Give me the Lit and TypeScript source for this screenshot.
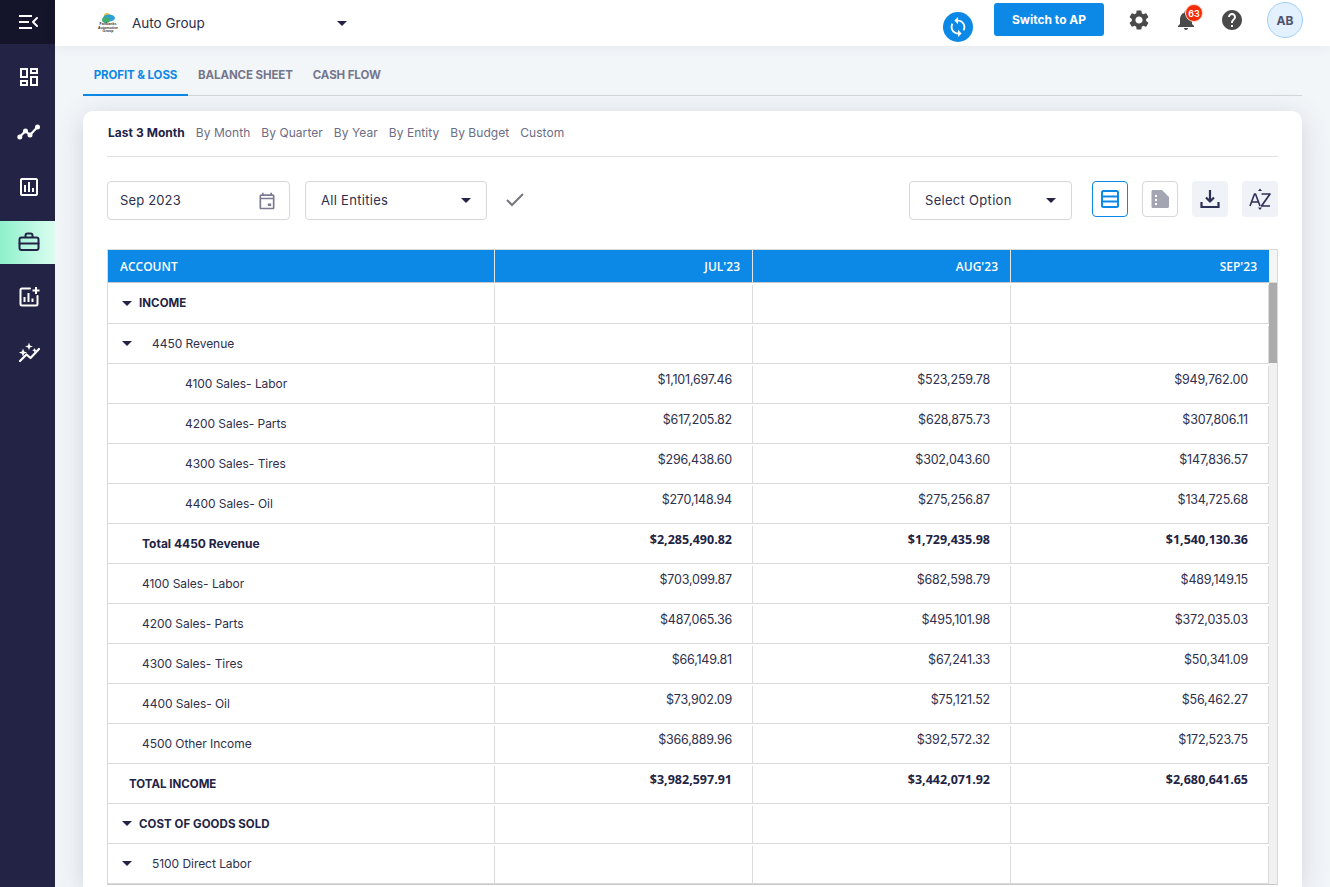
import { LitElement, html, css, svg } from "lit";
import { customElement } from "lit/decorators.js";

type Row = { label: string; kind: "section" | "group" | "child" | "total" | "item" | "grand"; v?: string[] };

const ROWS: Row[] = [
  { label: "INCOME", kind: "section" },
  { label: "4450 Revenue", kind: "group" },
  { label: "4100 Sales- Labor", kind: "child", v: ["$1,101,697.46", "$523,259.78", "$949,762.00"] },
  { label: "4200 Sales- Parts", kind: "child", v: ["$617,205.82", "$628,875.73", "$307,806.11"] },
  { label: "4300 Sales- Tires", kind: "child", v: ["$296,438.60", "$302,043.60", "$147,836.57"] },
  { label: "4400 Sales- Oil", kind: "child", v: ["$270,148.94", "$275,256.87", "$134,725.68"] },
  { label: "Total 4450 Revenue", kind: "total", v: ["$2,285,490.82", "$1,729,435.98", "$1,540,130.36"] },
  { label: "4100 Sales- Labor", kind: "item", v: ["$703,099.87", "$682,598.79", "$489,149.15"] },
  { label: "4200 Sales- Parts", kind: "item", v: ["$487,065.36", "$495,101.98", "$372,035.03"] },
  { label: "4300 Sales- Tires", kind: "item", v: ["$66,149.81", "$67,241.33", "$50,341.09"] },
  { label: "4400 Sales- Oil", kind: "item", v: ["$73,902.09", "$75,121.52", "$56,462.27"] },
  { label: "4500 Other Income", kind: "item", v: ["$366,889.96", "$392,572.32", "$172,523.75"] },
  { label: "TOTAL INCOME", kind: "grand", v: ["$3,982,597.91", "$3,442,071.92", "$2,680,641.65"] },
  { label: "COST OF GOODS SOLD", kind: "section" },
  { label: "5100 Direct Labor", kind: "group" },
];

const ico = (d: string, size = 24) =>
  html`<svg width=${size} height=${size} viewBox="0 0 24 24" fill="currentColor"><path d=${d} fill-rule="evenodd"></path></svg>`;

const P = {
  dash: "M19 5v2h-4V5h4M9 5v6H5V5h4m10 8v6h-4v-6h4M9 17v2H5v-2h4M21 3h-8v6h8V3zM11 3H3v10h8V3zm10 8h-8v10h8V11zm-10 4H3v6h8v-6z",
  report: "M19 3H5c-1.1 0-2 .9-2 2v14c0 1.1.9 2 2 2h14c1.1 0 2-.9 2-2V5c0-1.1-.9-2-2-2zm0 16H5V5h14v14zM7 10h2v7H7zM11 7h2v10h-2zM15 13h2v4h-2z",
  gear: "M19.14 12.94c.04-.3.06-.61.06-.94 0-.32-.02-.64-.07-.94l2.03-1.58c.18-.14.23-.41.12-.61l-1.92-3.32c-.12-.22-.37-.29-.59-.22l-2.39.96c-.5-.38-1.03-.7-1.62-.94l-.36-2.54c-.04-.24-.24-.41-.48-.41h-3.84c-.24 0-.43.17-.47.41l-.36 2.54c-.59.24-1.13.57-1.62.94l-2.39-.96c-.22-.08-.47 0-.59.22L2.74 8.87c-.12.21-.08.47.12.61l2.03 1.58c-.05.3-.09.63-.09.94s.02.64.07.94l-2.03 1.58c-.18.14-.23.41-.12.61l1.92 3.32c.12.22.37.29.59.22l2.39-.96c.5.38 1.03.7 1.62.94l.36 2.54c.05.24.24.41.48.41h3.84c.24 0 .44-.17.47-.41l.36-2.54c.59-.24 1.13-.56 1.62-.94l2.39.96c.22.08.47 0 .59-.22l1.92-3.32c.12-.22.07-.47-.12-.61l-2.01-1.58zM12 15.6c-1.98 0-3.6-1.62-3.6-3.6s1.62-3.6 3.6-3.6 3.6 1.62 3.6 3.6-1.62 3.6-3.6 3.6z",
  bell: "M12 22c1.1 0 2-.9 2-2h-4c0 1.1.89 2 2 2zm6-6v-5c0-3.07-1.64-5.64-4.5-6.32V4c0-.83-.67-1.5-1.5-1.5s-1.5.67-1.5 1.5v.68C7.63 5.36 6 7.92 6 11v5l-2 2v1h16v-1l-2-2z",
  help: "M12 2C6.48 2 2 6.48 2 12s4.48 10 10 10 10-4.48 10-10S17.52 2 12 2zm1 17h-2v-2h2v2zm2.07-7.75l-.9.92C13.45 12.9 13 13.5 13 15h-2v-.5c0-1.1.45-2.1 1.17-2.83l1.24-1.26c.37-.36.59-.86.59-1.41 0-1.1-.9-2-2-2s-2 .9-2 2H8c0-2.21 1.79-4 4-4s4 1.79 4 4c0 .88-.36 1.68-.93 2.25z",
  sync: "M12 4V1L8 5l4 4V6c3.31 0 6 2.69 6 6 0 1.01-.25 1.97-.7 2.8l1.46 1.46C19.54 15.03 20 13.57 20 12c0-4.42-3.58-8-8-8zm0 14c-3.31 0-6-2.69-6-6 0-1.01.25-1.97.7-2.8L5.24 7.74C4.46 8.97 4 10.43 4 12c0 4.42 3.58 8 8 8v3l4-4-4-4v3z",
  cal: "M19 4h-1V2h-2v2H8V2H6v2H5c-1.1 0-2 .9-2 2v14c0 1.1.9 2 2 2h14c1.1 0 2-.9 2-2V6c0-1.1-.9-2-2-2zm0 16H5V10h14v10zM5 8V6h14v2H5zM13 15h4v3h-4z",
  doc: "M5 3h9l7 7v9.500c0 .8-.7 1.500-1.500 1.500H5c-.8 0-1.500-.7-1.500-1.500v-15C3.500 3.700 4.200 3 5 3zm2 5v2h2V8H7zm0 4v2h2v-2H7zm0 4v2h2v-2H7z",
};

const stroke = (body: unknown, size = 24, sw = 2) =>
  html`<svg width=${size} height=${size} viewBox="0 0 24 24" fill="none" stroke="currentColor" stroke-width=${sw} stroke-linecap="round" stroke-linejoin="round">${body}</svg>`;

@customElement("app-root")
export class AppRoot extends LitElement {
  static styles = css`
    :host { display: flex; height: 100vh; overflow: hidden; background: #f3f6f9; color: #222345;
      font-family: Inter, "Noto Sans", sans-serif; font-size: 12px; }
    * { box-sizing: border-box; }
    svg { display: block; flex: none; }

    .side { width: 55px; flex: none; background: #222345; color: #fff; display: flex; flex-direction: column; }
    .side-top { height: 44px; background: #14142b; display: flex; align-items: center; justify-content: center; padding-left: 1px; }
    .nav { height: 43px; margin-bottom: 12px; padding-left: 2px; padding-bottom: 2px; display: flex; align-items: center; justify-content: center; }
    .navs { padding-top: 12px; display: flex; flex-direction: column; }
    .nav.on { background: linear-gradient(90deg, #8df0cb, #dcfdf1); color: #222345; }

    .main { flex: 1; min-width: 0; display: flex; flex-direction: column; }
    .top { height: 46px; flex: none; background: #fff; display: flex; align-items: center; position: relative; z-index: 2;
      box-shadow: 0 2px 10px rgba(60,70,90,.07); padding-left: 41px; }
    .logo { width: 24px; display: flex; flex-direction: column; align-items: center; margin-top: 1px; }
    .logo span { font: 700 3.6px/3.8px "Liberation Sans", sans-serif; color: #333; text-align: center; white-space: nowrap; }
    .brand { margin-left: 12px; width: 205px; font-size: 13.5px; color: #2e2f4d; }
    .caret { width: 0; height: 0; border-left: 5px solid transparent; border-right: 5px solid transparent; border-top: 5px solid #222345; flex: none; }
    .top-r { margin-left: auto; display: flex; align-items: center; padding-right: 27px; }
    .sync { width: 30px; height: 30px; border-radius: 50%; background: #0c88e6; color: #fff; display: flex; align-items: center; justify-content: center; margin-top: 8px; margin-right: 21px; }
    .ap { width: 110px; height: 33px; margin-top: -7px; background: #0c88e6; color: #fff; border-radius: 3px; border: 0; font: 700 12px Inter, sans-serif; display: flex; align-items: center; justify-content: center; }
    .ic { color: #4a4a4a; margin-top: -6px; }
    .gear { margin-left: 23px; }
    .bell { margin-left: 23px; position: relative; }
    .badge { position: absolute; left: 11px; top: -4px; width: 18px; height: 18px; border-radius: 50%; background: #f62a04; border: 1px solid #ffd9d0; color: #fff; font-size: 9px; font-weight: 600; display: flex; align-items: center; justify-content: center; }
    .help { margin-left: 22px; }
    .avatar { margin-left: 23px; margin-top: -6px; width: 36px; height: 36px; border-radius: 50%; background: #e3f0fd; border: 1px solid #9ecff7; color: #50526e; font-weight: 700; font-size: 12px; display: flex; align-items: center; justify-content: center; }

    .body { flex: 1; min-height: 0; padding: 0 28px 0 28px; display: flex; flex-direction: column; }
    .tabs { height: 50px; flex: none; display: flex; border-bottom: 1px solid #d3d6db; }
    .tab { padding: 8px 10px 0; display: flex; align-items: center; height: 50px; font-size: 11.5px; font-weight: 700; color: #75768c; letter-spacing: -.1px; white-space: nowrap; }
    .tab.on { color: #0c88e6; border-bottom: 2px solid #0c88e6; width: 105px; justify-content: center; padding-top: 10px; }
    .card { margin-top: 15px; flex: 1; min-height: 0; background: #fff; border-radius: 10px 10px 0 0; padding: 0 24px; box-shadow: 0 5px 28px rgba(50,60,80,.18); }
    .subs { height: 46px; border-bottom: 1px solid #e2e2e6; display: flex; align-items: center; gap: 11px; padding: 0 1px 2px; color: #6c6d84; font-size: 12px; letter-spacing: .05px; }
    .subs b { color: #222345; font-weight: 700; }
    .tools { height: 92px; padding-top: 24px; display: flex; align-items: flex-start; }
    .field { height: 39px; border: 1px solid #d6d7da; border-radius: 4px; display: flex; align-items: center; font-size: 13px; letter-spacing: .3px; color: #2e2f4d; padding-bottom: 2px; }
    .date { width: 183px; padding-left: 12px; padding-right: 12px; justify-content: space-between; letter-spacing: .15px; }
    .date svg { color: #7a7b90; margin-top: 2px; }
    .field .caret { margin-top: 2px; }
    .ent { width: 182px; margin-left: 15px; padding-left: 15px; padding-right: 15px; justify-content: space-between; }
    .check { color: #75767f; margin-left: 16px; margin-top: 6px; }
    .opt { width: 163px; margin-left: auto; padding-left: 15px; padding-right: 15px; justify-content: space-between; }
    .btn { width: 36px; height: 36px; margin-left: 14px; border-radius: 4px; display: flex; align-items: center; justify-content: center; }
    .btn.a { margin-left: 20px; border: 1px solid #0c88e6; color: #0c88e6; }
    .btn.b { border: 1px solid #d6d7da; color: #a4a5b2; }
    .btn.c { background: #eff3f8; color: #2e2f55; }

    .table { border: 1px solid #d9d9d9; border-bottom: 1px solid #c9c9c9; display: flex; flex-direction: column; height: 636px; }
    .scroller { display: flex; flex: 1; min-height: 0; overflow: hidden; }
    .thead { display: grid; grid-template-columns: 386px 258px 258px 259px 8px; height: 33px; flex: none; }
    .th { background: #0c88e6; color: #fff; border-bottom: 1px solid #c8c8c8; border-left: 1px solid #e4e4e4; font: 600 12px "Open Sans", sans-serif; display: flex; align-items: center; justify-content: flex-end; padding: 0 12px; }
    .th:first-child { justify-content: flex-start; border-left: 0; }
    .th.gap { background: #f4f5f5; border-left: 0; padding: 0; border-bottom-color: #d9d9d9; }
    .rows { width: 1161px; flex: none; }
    .row { display: grid; grid-template-columns: 386px 258px 258px 259px; height: 40px; border-bottom: 1px solid #dadada; }
    .row:first-child { height: 41px; }
    .cell { display: flex; align-items: center; font-size: 12px; letter-spacing: -.05px; color: #2e2f4d; min-width: 0; white-space: nowrap; }
    .num { border-left: 1px solid #dadada; justify-content: flex-end; align-items: flex-start; padding: 6px 20px 0 0; margin-top: 2px; font-size: 12.5px; letter-spacing: -.2px; }
    .num:last-child { border-right: 1px solid #dadada; }
    .row .caret { margin: 0 0 0 14px; }
    .section .lab { font-size: 11.5px; font-weight: 700; letter-spacing: .05px; color: #222345; margin-left: 7px; }
    .group .lab { margin-left: 20px; }
    .child .lab { padding-left: 77px; }
    .item .lab, .total .lab { padding-left: 34px; }
    .total .lab { font-weight: 700; color: #222345; font-size: 12px; letter-spacing: 0; }
    .grand .lab { padding-left: 21px; font-weight: 700; color: #222345; font-size: 11.5px; letter-spacing: 0; }
    .total .num, .grand .num { font-family: "Open Sans", sans-serif; font-weight: 700; font-size: 12.5px; letter-spacing: 0; color: #222345; padding-top: 5px; }
    .track { flex: 1; background: #f1f1f1; }
    .thumb { height: 80px; background: #ababab; }
  `;

  private renderRow(r: Row) {
    const caret = r.kind === "section" || r.kind === "group";
    return html`<div class="row ${r.kind}">
      <div class="cell">${caret ? html`<span class="caret"></span>` : ""}<span class="lab">${r.label}</span></div>
      ${[0, 1, 2].map((i) => html`<div class="cell num">${r.v ? r.v[i] : ""}</div>`)}
    </div>`;
  }

  render() {
    return html`
      <aside class="side">
        <div class="side-top">
          ${stroke(svg`<path d="M3 6h13M3 12h10M3 18h13" stroke-linecap="butt"/><path d="M21 8l-4 4 4 4"/>`, 24, 2)}
        </div>
        <div class="navs">
          <div class="nav">${ico(P.dash)}</div>
          <div class="nav">${stroke(svg`<path d="M2.5 17l6-6 4.5 4 7.5-8" stroke-width="2.2"/><circle cx="2.8" cy="17" r="1.5" fill="currentColor"/><circle cx="8.5" cy="11" r="1.5" fill="currentColor"/><circle cx="13" cy="15" r="1.5" fill="currentColor"/><circle cx="20.5" cy="7" r="1.5" fill="currentColor"/>`)}</div>
          <div class="nav">${ico(P.report)}</div>
          <div class="nav on">${stroke(svg`<rect x="2.5" y="7.5" width="19" height="12.5" rx="2"/><path d="M8.5 7V5.5a2 2 0 0 1 2-2h3a2 2 0 0 1 2 2V7M2.5 13.5h19"/>`)}</div>
          <div class="nav">${stroke(svg`<path d="M13 3.5H5a1.5 1.5 0 0 0-1.5 1.5v14A1.5 1.5 0 0 0 5 20.500h14a1.500 1.500 0 0 0 1.500-1.500v-8"/><path d="M7.500 17v-5M11.500 17V8M15.500 17v-3.500" stroke-linecap="butt"/><path d="M19 2v7M15.500 5.500h7" stroke-linecap="butt"/>`)}</div>
          <div class="nav">${stroke(svg`<path d="M3 21l6.500-6.500 4 3.500L22 9" stroke-width="2.200"/><path fill="currentColor" stroke="none" d="M6 8.500l1.100 3 3 1.100-3 1.100L6 16.700l-1.100-3-3-1.100 3-1.100zM12 2.500l1 2.900 2.900 1-2.900 1-1 2.900-1-2.900-2.900-1 2.900-1zM17.500 8l.7 1.600 1.600.7-1.600.7-.7 1.600-.7-1.600-1.600-.7 1.600-.7z"/>`)}</div>
        </div>
      </aside>
      <div class="main">
        <header class="top">
          <div class="logo">
            <svg width="14" height="10" viewBox="0 0 14 10"><ellipse cx="6" cy="2.500" rx="3" ry="2.500" fill="#e9c53a"/><ellipse cx="8" cy="5" rx="6" ry="3.500" fill="#2f9fd8"/><ellipse cx="5" cy="7" rx="4" ry="3" fill="#3fae6e"/></svg>
            <span>Fairbanks</span><span>Automotive</span><span>Group</span>
          </div>
          <div class="brand">Auto Group</div>
          <span class="caret"></span>
          <div class="top-r">
            <div class="sync">${ico(P.sync, 22)}</div>
            <div class="ap">Switch to AP</div>
            <div class="ic gear">${ico(P.gear)}</div>
            <div class="ic bell">${ico(P.bell)}<span class="badge">63</span></div>
            <div class="ic help">${ico(P.help)}</div>
            <div class="avatar">AB</div>
          </div>
        </header>
        <div class="body">
          <nav class="tabs">
            <div class="tab on">PROFIT &amp; LOSS</div>
            <div class="tab">BALANCE SHEET</div>
            <div class="tab">CASH FLOW</div>
          </nav>
          <section class="card">
            <div class="subs">
              <b>Last 3 Month</b><span>By Month</span><span>By Quarter</span><span>By Year</span><span>By Entity</span><span>By Budget</span><span>Custom</span>
            </div>
            <div class="tools">
              <div class="field date">Sep 2023 ${ico(P.cal, 20)}</div>
              <div class="field ent">All Entities <span class="caret"></span></div>
              <div class="check">${stroke(svg`<path d="M4 13l5 5L20 7" stroke-linecap="butt" stroke-linejoin="miter"/>`)}</div>
              <div class="field opt">Select Option <span class="caret"></span></div>
              <div class="btn a">${stroke(svg`<rect x="4" y="4" width="16" height="16" rx="1.500"/><path d="M4 9.500h16M4 14.500h16" stroke-linecap="butt"/>`)}</div>
              <div class="btn b">${ico(P.doc)}</div>
              <div class="btn c">${stroke(svg`<path d="M12 3v11M8 10.500l4 4 4-4" stroke-linecap="butt"/><path d="M3.500 15v5h17v-5" stroke-linecap="butt" stroke-linejoin="miter"/>`, 24, 2.200)}</div>
              <div class="btn c">${stroke(svg`<path d="M2 19L6.500 7h1L12 19M3.800 15h7.400" stroke-width="1.600" stroke-linecap="butt"/><path d="M13.500 7H22L13.500 19H22" stroke-width="1.700" stroke-linecap="butt"/><path fill="currentColor" stroke="none" d="M12 1.500l2 2.500h-4zM12 23l2-2.500h-4z"/>`)}</div>
            </div>
            <div class="table">
              <div class="thead">
                <div class="th">ACCOUNT</div><div class="th">JUL'23</div><div class="th">AUG'23</div><div class="th">SEP'23</div><div class="th gap"></div>
              </div>
              <div class="scroller">
                <div class="rows">${ROWS.map((r) => this.renderRow(r))}</div>
                <div class="track"><div class="thumb"></div></div>
              </div>
            </div>
          </section>
        </div>
      </div>
    `;
  }
}
